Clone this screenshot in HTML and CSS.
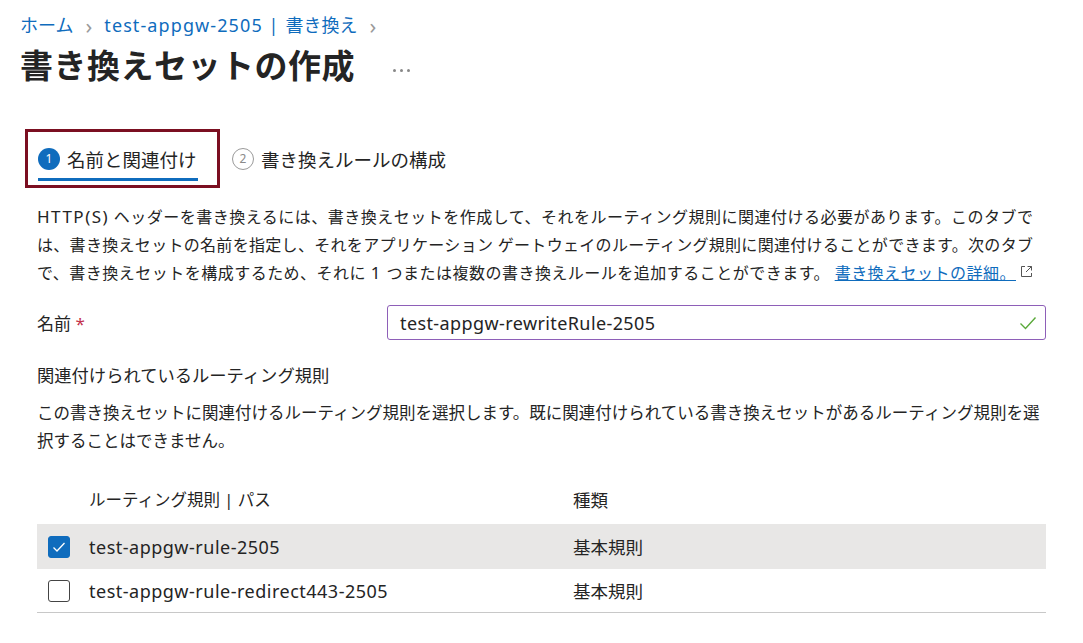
FILE: index.html
```html
<!DOCTYPE html>
<html lang="ja">
<head>
<meta charset="utf-8">
<link rel="stylesheet" href="styles.css">
</head>
<body>
<div class="header">
  <nav class="crumbs">
    <a class="crumb">ホーム</a>
    <span class="sep">›</span>
    <a class="crumb"><span class="lat">test-appgw-2505 | </span>書き換え</a>
    <span class="sep">›</span>
  </nav>
  <div class="title-row">
    <h1 class="title">書き換えセットの作成</h1>
    <span class="more"><i></i><i></i><i></i></span>
  </div>
</div>

<div class="tabs">
  <div class="tab tab-active">
    <span class="step step-on">1</span>
    <span class="tab-label">名前と関連付け</span>
  </div>
  <div class="tab">
    <span class="step step-off">2</span>
    <span class="tab-label">書き換えルールの構成</span>
  </div>
</div>

<div class="content">
  <p class="intro"><span class="lat">HTTP(S)</span> ヘッダーを書き換えるには、書き換えセットを作成して、それをルーティング規則に関連付ける必要があります。このタブで<br>は、書き換えセットの名前を指定し、それをアプリケーション ゲートウェイのルーティング規則に関連付けることができます。次のタブ<br>で、書き換えセットを構成するため、それに <span class="lat">1</span> つまたは複数の書き換えルールを追加することができます。 <a class="link">書き換えセットの詳細。</a><svg class="ext" width="13" height="13" viewBox="0 0 13 13"><path d="M5 1.5H1.5v10h10V8" fill="none" stroke="#555" stroke-width="1"/><path d="M7.5 1.5h4v4M11.5 1.5L6 7" fill="none" stroke="#555" stroke-width="1"/></svg></p>

  <div class="field">
    <label class="field-label">名前 <span class="req">*</span></label>
    <div class="input">
      <span class="input-text">test-appgw-rewriteRule-2505</span>
      <svg class="ok" width="18" height="14" viewBox="0 0 18 14"><path d="M1.5 7.5l5 5L16.5 1.5" fill="none" stroke="#5aa93a" stroke-width="1.4"/></svg>
    </div>
  </div>

  <h2 class="section">関連付けられているルーティング規則</h2>
  <p class="desc">この書き換えセットに関連付けるルーティング規則を選択します。既に関連付けられている書き換えセットがあるルーティング規則を選<br>択することはできません。</p>

  <div class="table">
    <div class="row head">
      <span class="cell-check"></span>
      <span class="cell-name">ルーティング規則 | パス</span>
      <span class="cell-type">種類</span>
    </div>
    <div class="row selected">
      <span class="cell-check"><span class="box box-on"><svg width="14" height="12" viewBox="0 0 14 12"><path d="M1.5 6.5l3.5 3.5L12.5 2" fill="none" stroke="#fff" stroke-width="1.3"/></svg></span></span>
      <span class="cell-name lat-row">test-appgw-rule-2505</span>
      <span class="cell-type">基本規則</span>
    </div>
    <div class="row last">
      <span class="cell-check"><span class="box"></span></span>
      <span class="cell-name lat-row">test-appgw-rule-redirect443-2505</span>
      <span class="cell-type">基本規則</span>
    </div>
  </div>
</div>
</body>
</html>
```

FILE: styles.css
```css
* { box-sizing: border-box; }
html, body { margin: 0; padding: 0; background: #fff; }
body {
  font-family: "Noto Sans", "Noto Sans CJK JP", sans-serif;
  color: #242424;
  width: 1083px;
  height: 643px;
  overflow: hidden;
}
.header { padding: 12px 0 0 20px; }
.crumbs { display: flex; align-items: center; gap: 12px; font-size: 18px; line-height: 26px; }
.crumb { color: #0f6cbd; }
.crumbs .lat { letter-spacing: 1.1px; }
.sep { color: #9a9a9a; font-size: 22px; line-height: 26px; }
.title-row { display: flex; align-items: center; gap: 38px; margin-top: 6px; }
.title { margin: 0; font-size: 33px; font-weight: 700; line-height: 44px; letter-spacing: 0.5px; color: #242424; }
.more { display: flex; gap: 4px; padding-top: 8px; }
.more i { width: 3px; height: 3px; background: #888; border-radius: 50%; }

.tabs { display: flex; align-items: stretch; margin: 41px 0 0 25px; height: 59px; }
.tab { display: flex; align-items: center; gap: 7px; padding: 0 12px; font-size: 18.5px; position: relative; }
.tab-active {
  border: 3px solid #7b0f21;
  width: 195px;
  padding-left: 10px;
}
.tab-active::after {
  content: "";
  position: absolute;
  left: 10px;
  right: 19px;
  bottom: 4px;
  height: 3px;
  background: #0f6cbd;
}
.step {
  width: 22px; height: 22px; border-radius: 50%;
  display: inline-flex; align-items: center; justify-content: center;
  font-size: 12px; line-height: 1;
}
.step-on { background: #0f6cbd; color: #fff; }
.step-off { border: 1px solid #9a9a9a; color: #8a8a8a; }
.tab-label { color: #242424; }

.content { padding: 0 37px; }
.intro {
  margin: 15px 0 0;
  width: 996px;
  font-size: 16px;
  line-height: 28px;
  color: #242424;
  text-align: justify;
  text-align-last: justify;
}
.intro .lat { letter-spacing: 1.5px; font-size: 17px; }
.link { color: #0f6cbd; text-decoration: underline; }
.ext { margin-left: 4px; vertical-align: 1px; }

.field { display: flex; align-items: center; margin-top: 18px; }
.field-label { width: 350px; font-size: 17px; }
.req { color: #c4314b; }
.input {
  flex: 1;
  display: flex; align-items: center; justify-content: space-between;
  height: 35px;
  border: 1.5px solid #8e5fb8;
  border-radius: 3px;
  padding: 0 8px 0 12px;
  font-size: 18px;
  letter-spacing: 0.4px;
}

.section { margin: 22px 0 0; font-size: 17.3px; font-weight: 400; line-height: 28px; }
.desc { margin: 9px 0 0; font-size: 16.5px; line-height: 28px; }

.table { margin-top: 19px; }
.row { display: flex; align-items: center; height: 45px; font-size: 16.5px; }
.head { height: 50px; }
.selected { background: #e8e7e6; }
.last { border-bottom: 1px solid #c8c8c8; height: 44px; }
.cell-check { width: 52px; padding-left: 11px; display: flex; align-items: center; }
.cell-name { width: 484px; }
.lat-row { font-size: 18px; letter-spacing: 0.5px; }
.cell-type { font-size: 17.5px; }
.box {
  width: 22px; height: 22px; border: 1.5px solid #444; border-radius: 3px;
  display: inline-flex; align-items: center; justify-content: center; background: #fff;
}
.box-on { background: #0f6cbd; border-color: #0f6cbd; }
```
